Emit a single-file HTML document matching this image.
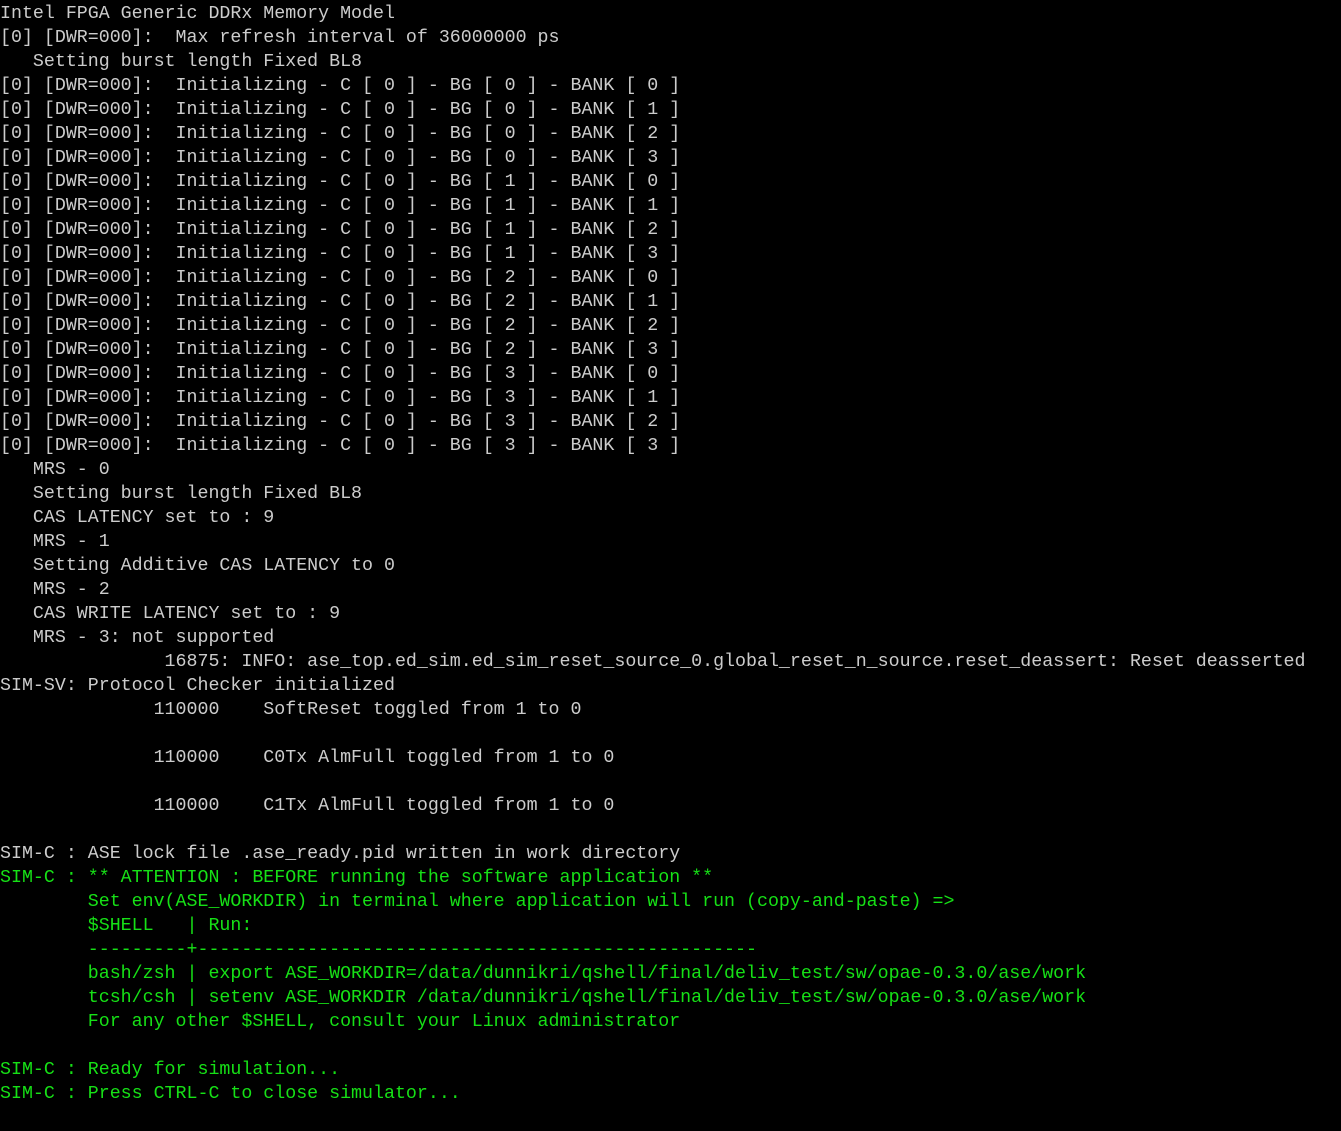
<!DOCTYPE html>
<html><head><style>
html,body{margin:0;padding:0;background:#000;width:1341px;height:1131px;overflow:hidden}
pre{margin:0;padding:2px 0 0 0;font-family:"Liberation Mono",monospace;font-size:18.3px;line-height:24px;color:#cccccc;white-space:pre}
.g{color:#16e016}
</style></head><body><pre>Intel FPGA Generic DDRx Memory Model
[0] [DWR=000]:  Max refresh interval of 36000000 ps
   Setting burst length Fixed BL8
[0] [DWR=000]:  Initializing - C [ 0 ] - BG [ 0 ] - BANK [ 0 ]
[0] [DWR=000]:  Initializing - C [ 0 ] - BG [ 0 ] - BANK [ 1 ]
[0] [DWR=000]:  Initializing - C [ 0 ] - BG [ 0 ] - BANK [ 2 ]
[0] [DWR=000]:  Initializing - C [ 0 ] - BG [ 0 ] - BANK [ 3 ]
[0] [DWR=000]:  Initializing - C [ 0 ] - BG [ 1 ] - BANK [ 0 ]
[0] [DWR=000]:  Initializing - C [ 0 ] - BG [ 1 ] - BANK [ 1 ]
[0] [DWR=000]:  Initializing - C [ 0 ] - BG [ 1 ] - BANK [ 2 ]
[0] [DWR=000]:  Initializing - C [ 0 ] - BG [ 1 ] - BANK [ 3 ]
[0] [DWR=000]:  Initializing - C [ 0 ] - BG [ 2 ] - BANK [ 0 ]
[0] [DWR=000]:  Initializing - C [ 0 ] - BG [ 2 ] - BANK [ 1 ]
[0] [DWR=000]:  Initializing - C [ 0 ] - BG [ 2 ] - BANK [ 2 ]
[0] [DWR=000]:  Initializing - C [ 0 ] - BG [ 2 ] - BANK [ 3 ]
[0] [DWR=000]:  Initializing - C [ 0 ] - BG [ 3 ] - BANK [ 0 ]
[0] [DWR=000]:  Initializing - C [ 0 ] - BG [ 3 ] - BANK [ 1 ]
[0] [DWR=000]:  Initializing - C [ 0 ] - BG [ 3 ] - BANK [ 2 ]
[0] [DWR=000]:  Initializing - C [ 0 ] - BG [ 3 ] - BANK [ 3 ]
   MRS - 0
   Setting burst length Fixed BL8
   CAS LATENCY set to : 9
   MRS - 1
   Setting Additive CAS LATENCY to 0
   MRS - 2
   CAS WRITE LATENCY set to : 9
   MRS - 3: not supported
               16875: INFO: ase_top.ed_sim.ed_sim_reset_source_0.global_reset_n_source.reset_deassert: Reset deasserted
SIM-SV: Protocol Checker initialized
              110000    SoftReset toggled from 1 to 0

              110000    C0Tx AlmFull toggled from 1 to 0

              110000    C1Tx AlmFull toggled from 1 to 0

SIM-C : ASE lock file .ase_ready.pid written in work directory
<span class="g">SIM-C : ** ATTENTION : BEFORE running the software application **
        Set env(ASE_WORKDIR) in terminal where application will run (copy-and-paste) =&gt;
        $SHELL   | Run:
        ---------+---------------------------------------------------
        bash/zsh | export ASE_WORKDIR=/data/dunnikri/qshell/final/deliv_test/sw/opae-0.3.0/ase/work
        tcsh/csh | setenv ASE_WORKDIR /data/dunnikri/qshell/final/deliv_test/sw/opae-0.3.0/ase/work
        For any other $SHELL, consult your Linux administrator

SIM-C : Ready for simulation...
SIM-C : Press CTRL-C to close simulator...</span>
</pre></body></html>
